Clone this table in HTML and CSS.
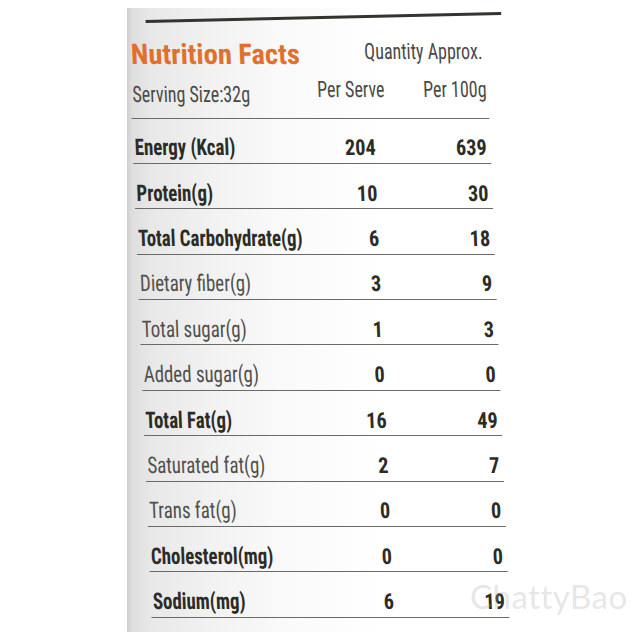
FILE: index.html
```html
<!DOCTYPE html>
<html lang="en">
<head>
<meta charset="utf-8">
<title>Nutrition Facts</title>
<link rel="stylesheet" href="styles.css">
</head>
<body>
<div class="page">
  <div class="label">
    <div class="content">
      <div class="topline"></div>
      <div class="title-row">
        <h1 class="title">Nutrition Facts</h1>
        <span class="qty">Quantity Approx.</span>
      </div>
      <div class="sub-row">
        <span class="serving">Serving Size:32g</span>
        <span class="per-serve">Per Serve</span>
        <span class="per-100">Per 100g</span>
      </div>
      <div class="rows">
        <div class="row bold"><span class="name">Energy (Kcal)</span><span class="v1">204</span><span class="v2">639</span></div>
        <div class="row bold"><span class="name">Protein(g)</span><span class="v1">10</span><span class="v2">30</span></div>
        <div class="row bold"><span class="name">Total Carbohydrate(g)</span><span class="v1">6</span><span class="v2">18</span></div>
        <div class="row"><span class="name">Dietary fiber(g)</span><span class="v1">3</span><span class="v2">9</span></div>
        <div class="row"><span class="name">Total sugar(g)</span><span class="v1">1</span><span class="v2">3</span></div>
        <div class="row"><span class="name">Added sugar(g)</span><span class="v1">0</span><span class="v2">0</span></div>
        <div class="row bold"><span class="name">Total Fat(g)</span><span class="v1">16</span><span class="v2">49</span></div>
        <div class="row"><span class="name">Saturated fat(g)</span><span class="v1">2</span><span class="v2">7</span></div>
        <div class="row"><span class="name">Trans fat(g)</span><span class="v1">0</span><span class="v2">0</span></div>
        <div class="row bold"><span class="name">Cholesterol(mg)</span><span class="v1">0</span><span class="v2">0</span></div>
        <div class="row bold"><span class="name">Sodium(mg)</span><span class="v1">6</span><span class="v2">19</span></div>
      </div>
    </div>
  </div>
  <div class="watermark">ChattyBao</div>
</div>
</body>
</html>
```

FILE: styles.css
```css
html, body {
  margin: 0;
  padding: 0;
  background: #ffffff;
}

.page {
  position: relative;
  width: 640px;
  height: 640px;
  overflow: hidden;
  font-family: "Roboto Condensed", "Liberation Sans Narrow", "Arial Narrow", "DejaVu Sans Condensed", Roboto, sans-serif;
  font-stretch: condensed;
}

.label {
  margin-left: 127px;
  margin-top: 8px;
  width: 420px;
  height: 624px;
  background: linear-gradient(to right, #cfcfcf 0, #dedede 5px, #e8e8e8 25px, #f1f1f1 80px, #f9f9f9 150px, #ffffff 260px);
}

.content {
  width: 358px;
  padding-top: 8px;
  transform: skewX(2.3deg);
  transform-origin: 0 0;
}

.topline {
  margin-left: 18px;
  width: 356px;
  height: 2.5px;
  background: #34342e;
  transform: rotate(-1.3deg);
}

/* header */
.title-row {
  display: flex;
  justify-content: space-between;
  align-items: flex-start;
  padding: 0 4px 0 2px;
  margin-top: 16px;
  height: 40px;
}

.title {
  margin: 0;
  font-size: 28.5px;
  line-height: 40px;
  font-weight: 700;
  color: #e36f2c;
}

.qty,
.serving,
.per-serve,
.per-100 {
  display: inline-block;
  font-size: 22.5px;
  color: #4a4a46;
  transform: scaleX(0.8);
}

.qty {
  line-height: 32px;
  transform-origin: right center;
}

.sub-row {
  display: flex;
  align-items: flex-start;
  padding: 0 2px;
  height: 44px;
  box-sizing: border-box;
  border-bottom: 1.5px solid #6a6a66;
}

.serving {
  flex: 1;
  line-height: 38px;
  transform-origin: left center;
}

.per-serve {
  line-height: 29px;
  margin-right: 22px;
  transform-origin: right center;
}

.per-100 {
  line-height: 28px;
  transform-origin: right center;
}

/* table rows */
.rows {
  display: flex;
  flex-direction: column;
}

.row {
  display: grid;
  grid-template-columns: minmax(0, 1fr) 60px 111px;
  align-items: end;
  height: 45.4px;
  box-sizing: border-box;
  padding: 0 4px 3.6px 2px;
  border-bottom: 1.5px solid #6a6a66;
  line-height: 23px;
}

.name {
  font-size: 23px;
  color: #50504b;
  transform: scaleX(0.82);
  transform-origin: left center;
  white-space: nowrap;
}

.row.bold .name {
  font-weight: 700;
  color: #2c2c26;
}

.v1,
.v2 {
  text-align: right;
  font-weight: 700;
  font-size: 22px;
  color: #2c2c26;
  transform: scaleX(0.92);
  transform-origin: right center;
}

.watermark {
  position: absolute;
  left: 470px;
  top: 578px;
  font-family: Lato, "Open Sans", sans-serif;
  font-size: 33px;
  line-height: 36px;
  color: rgba(170, 170, 170, 0.3);
  letter-spacing: 0.5px;
}
```
